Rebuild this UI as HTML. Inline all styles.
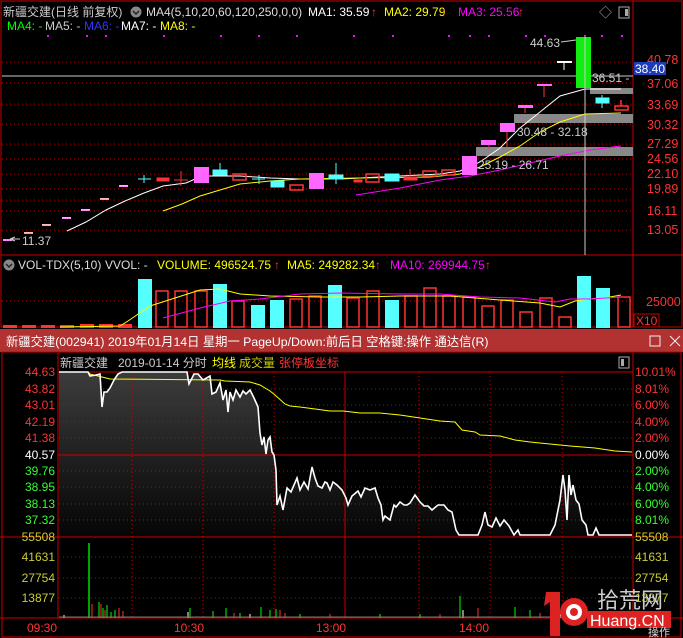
<!DOCTYPE html>
<html><head><meta charset="utf-8"><style>
html,body{margin:0;padding:0;background:#000;width:683px;height:638px;overflow:hidden}
svg{display:block}
text{font-family:"Liberation Sans","Noto Sans CJK SC",sans-serif}
</style></head><body>
<svg width="683" height="638" viewBox="0 0 683 638" xmlns="http://www.w3.org/2000/svg" font-size="12">
<defs>
<linearGradient id="g" x1="0" y1="0" x2="0" y2="1"><stop offset="0" stop-color="#3c3c3c"/><stop offset="1" stop-color="#050505"/></linearGradient>
</defs>
<rect width="683" height="638" fill="#000"/>
<rect x="1" y="1" width="681" height="326" fill="none" stroke="#c00" stroke-width="1"/>
<line x1="633" y1="1" x2="633" y2="327" stroke="#c00"/>
<line x1="1" y1="255" x2="683" y2="255" stroke="#c00"/>
<g stroke="#c00" stroke-dasharray="1,3">
<line x1="2" y1="62" x2="633" y2="62"/><line x1="2" y1="83" x2="633" y2="83"/><line x1="2" y1="104" x2="633" y2="104"/>
<line x1="2" y1="124" x2="633" y2="124"/><line x1="2" y1="144" x2="633" y2="144"/><line x1="2" y1="159" x2="633" y2="159"/>
<line x1="2" y1="174" x2="633" y2="174"/><line x1="2" y1="189" x2="633" y2="189"/><line x1="2" y1="200" x2="633" y2="200"/>
<line x1="2" y1="211" x2="633" y2="211"/><line x1="2" y1="230" x2="633" y2="230"/>
<line x1="2" y1="301" x2="633" y2="301"/>
</g>
<line x1="2" y1="76" x2="633" y2="76" stroke="#ccc"/>
<text x="3" y="16" fill="#ccc">新疆交建(日线 前复权)</text>
<circle cx="136" cy="12" r="5.5" fill="#888"/><path d="M133 11l3 3 3-3" stroke="#222" fill="none" stroke-width="1.5"/>
<text x="146" y="16" fill="#ddd">MA4(5,10,20,60,120,250,0,0)</text>
<text x="308" y="16" fill="#fff">MA1: 35.59</text><text x="371" y="16" fill="#f33">↑</text>
<text x="384" y="16" fill="#ff0">MA2: 29.79</text><text x="441" y="16" fill="#f33">↑</text>
<text x="458" y="16" fill="#f0f">MA3: 25.56</text><text x="518" y="16" fill="#f33">↑</text>
<text x="599" y="17" fill="#aaa" font-size="13">◇</text>
<rect x="619" y="7" width="10" height="11" fill="none" stroke="#aaa"/><rect x="625" y="9" width="3" height="7" fill="#aaa"/>
<text x="7" y="30" fill="#0f0">MA4: -</text><text x="45" y="30" fill="#ccc">MA5: -</text>
<text x="84" y="30" fill="#33f">MA6: -</text><text x="121" y="30" fill="#fff">MA7: -</text><text x="160" y="30" fill="#ff0">MA8: -</text>
<g fill="#f0f">
<rect x="47" y="35" width="2" height="2"/><rect x="86" y="35" width="2" height="2"/><rect x="105" y="35" width="2" height="2"/><rect x="163" y="35" width="2" height="2"/><rect x="220" y="35" width="2" height="2"/><rect x="258" y="35" width="2" height="2"/><rect x="296" y="35" width="2" height="2"/><rect x="353" y="35" width="2" height="2"/><rect x="392" y="35" width="2" height="2"/><rect x="448" y="35" width="2" height="2"/><rect x="469" y="35" width="2" height="2"/><rect x="488" y="35" width="2" height="2"/><rect x="525" y="35" width="2" height="2"/><rect x="544" y="35" width="2" height="2"/><rect x="601" y="35" width="2" height="2"/><rect x="621" y="35" width="2" height="2"/>
</g>
<rect x="590" y="88" width="43" height="6" fill="#888"/>
<rect x="514" y="114" width="119" height="9" fill="#888"/>
<rect x="476" y="147" width="157" height="9" fill="#888"/>
<polyline fill="none" stroke="#fff" points="67,231 86,222 106,210 125,201 144,193 163,186 186,183 202,176 240,176 270,178 300,179 340,179 400,176 440,174 460,171 480,162 500,148 520,128 540,112 560,96 585,89 621,89"/>
<polyline fill="none" stroke="#ff0" points="163,211 182,204 200,196 220,190 240,184 270,181 300,179 360,178 430,177 460,174 480,167 500,157 520,146 540,132 560,122 585,114 621,113"/>
<polyline fill="none" stroke="#f0f" points="356,195 400,188 440,180 470,176 500,170 530,163 560,156 590,150 621,146"/>
<g fill="#fbb" stroke="none">
<rect x="3" y="239" width="9" height="1.5" fill="#f8f"/><rect x="24" y="232" width="9" height="1.5"/><rect x="42" y="224" width="9" height="1.5"/><rect x="62" y="217" width="9" height="1.5"/><rect x="81" y="209" width="9" height="1.5"/><rect x="100" y="198" width="9" height="1.5"/><rect x="119" y="185" width="9" height="1.5"/>
</g>
<g fill="#f8f">
<rect x="3" y="240" width="9" height="1"/><rect x="24" y="233" width="9" height="1"/><rect x="42" y="225" width="9" height="1"/><rect x="62" y="218" width="9" height="1"/><rect x="81" y="210" width="9" height="1"/><rect x="100" y="199" width="9" height="1"/><rect x="119" y="186" width="9" height="1"/>
</g>
<g stroke="#5ff" fill="#5ff">
<line x1="138" y1="179" x2="151" y2="179"/><line x1="144" y1="175" x2="144" y2="183"/>
<line x1="220" y1="163" x2="220" y2="175"/><rect x="213" y="170" width="14" height="5"/>
<line x1="252" y1="179" x2="265" y2="179"/><line x1="259" y1="175" x2="259" y2="184"/>
<rect x="271" y="181" width="13" height="6"/>
<line x1="336" y1="163" x2="336" y2="184"/><rect x="329" y="175" width="14" height="4"/>
<rect x="385" y="174" width="14" height="7"/>
<line x1="602" y1="95" x2="602" y2="108"/><rect x="596" y="98" width="13" height="5"/>
</g>
<g stroke="#f33" fill="#f33">
<rect x="157" y="178" width="12" height="3"/>
<line x1="174" y1="180" x2="188" y2="180"/><line x1="181" y1="171" x2="181" y2="186"/>
<rect x="354" y="180" width="8" height="2"/><line x1="410" y1="169" x2="410" y2="180"/><rect x="404" y="177" width="13" height="3"/>
</g>
<g stroke="#f33" fill="none" stroke-width="1.5">
<rect x="233" y="174" width="13" height="6"/><rect x="290" y="185" width="13" height="5"/><rect x="366" y="174" width="13" height="8"/>
<rect x="423" y="171" width="13" height="5"/><rect x="442" y="170" width="13" height="5"/><rect x="615" y="106" width="13" height="4"/>
<line x1="621" y1="100" x2="621" y2="106"/>
</g>
<g fill="#f6f">
<rect x="194" y="167" width="15" height="16"/><rect x="309" y="173" width="15" height="16"/><rect x="462" y="156" width="15" height="19"/>
<rect x="481" y="140" width="15" height="5"/><rect x="500" y="123" width="15" height="9"/><rect x="518" y="105" width="15" height="3"/><rect x="537" y="84" width="15" height="2"/>
</g>
<g stroke="#f33"><line x1="507" y1="132" x2="507" y2="147"/><line x1="525" y1="108" x2="525" y2="113"/><line x1="544" y1="86" x2="544" y2="97"/><line x1="489" y1="145" x2="489" y2="149"/></g>
<rect x="557" y="61" width="15" height="2" fill="#fff"/><line x1="564" y1="62" x2="564" y2="70" stroke="#fff"/>
<rect x="576" y="37" width="15" height="51" fill="#1e1"/>
<line x1="585" y1="35" x2="585" y2="255" stroke="#ccc"/>
<text x="530" y="47" fill="#ccc">44.63</text><line x1="561" y1="42" x2="576" y2="40" stroke="#ccc"/>
<text x="592" y="82" fill="#ccc">36.51 -</text>
<text x="517" y="136" fill="#ccc">30.48 - 32.18</text>
<text x="478" y="169" fill="#ccc">25.19 - 26.71</text>
<text x="22" y="245" fill="#ccc">11.37</text><path d="M10 239l5 -2 M10 239l5 2 M10 239h10" stroke="#ccc"/>
<g fill="#f33" font-size="12.5">
<text x="647" y="64">40.78</text>
<text x="647" y="88">37.06</text><text x="647" y="109">33.69</text><text x="647" y="129">30.32</text><text x="647" y="148">27.29</text>
<text x="647" y="163">24.56</text><text x="647" y="178">22.10</text><text x="647" y="193">19.89</text><text x="647" y="215">16.11</text><text x="647" y="234">13.05</text>
<text x="646" y="306">25000</text>
</g>
<rect x="634" y="62" width="32" height="13" fill="#1c3cb8"/><text x="635" y="73" fill="#fff">38.40</text>
<circle cx="9" cy="265" r="5.5" fill="#888"/><path d="M6 264l3 3 3-3" stroke="#222" fill="none" stroke-width="1.5"/>
<text x="18" y="269" fill="#ddd">VOL-TDX(5,10)</text><text x="105" y="269" fill="#ddd">VVOL: -</text>
<text x="157" y="269" fill="#ff0">VOLUME: 496524.75</text><text x="274" y="269" fill="#f33">↑</text>
<text x="287" y="269" fill="#ff0">MA5: 249282.34</text><text x="375" y="269" fill="#f33">↑</text>
<text x="390" y="269" fill="#f0f">MA10: 269944.75</text><text x="485" y="269" fill="#f33">↑</text>
<rect x="634" y="314" width="25" height="13" fill="none" stroke="#c00"/><text x="636" y="325" fill="#f33">X10</text>
<g fill="#5ff">
<rect x="138" y="279" width="14" height="49"/><rect x="213" y="284" width="14" height="44"/><rect x="251" y="305" width="14" height="23"/><rect x="270" y="300" width="14" height="28"/>
<rect x="328" y="285" width="14" height="43"/><rect x="385" y="300" width="14" height="28"/><rect x="577" y="276" width="14" height="52"/><rect x="596" y="288" width="14" height="40"/>
</g>
<g fill="none" stroke="#f33" stroke-width="1.5">
<rect x="156" y="291" width="12" height="36"/><rect x="175" y="291" width="12" height="36"/><rect x="195" y="291" width="12" height="36"/><rect x="232" y="301" width="12" height="26"/>
<rect x="290" y="299" width="12" height="28"/><rect x="309" y="296" width="12" height="31"/><rect x="347" y="298" width="12" height="29"/><rect x="367" y="291" width="12" height="36"/>
<rect x="405" y="296" width="12" height="31"/><rect x="424" y="288" width="12" height="39"/><rect x="443" y="296" width="12" height="31"/><rect x="463" y="297" width="12" height="30"/>
<rect x="482" y="306" width="12" height="21"/><rect x="501" y="300" width="12" height="27"/><rect x="520" y="312" width="12" height="15"/><rect x="540" y="298" width="12" height="29"/>
<rect x="559" y="317" width="12" height="10"/><rect x="618" y="297" width="12" height="30"/>
</g>
<g fill="#f33"><rect x="3" y="325" width="14" height="3"/><rect x="22" y="325" width="14" height="3"/><rect x="41" y="325" width="14" height="3"/><rect x="60" y="325" width="14" height="3"/><rect x="80" y="324" width="14" height="4"/><rect x="99" y="324" width="14" height="4"/><rect x="118" y="324" width="14" height="4"/></g>
<polyline fill="none" stroke="#ff0" points="60,327 120,326 128,321 150,306 200,290 220,289 240,294 270,296 320,297 360,297 400,296 450,296 500,300 540,303 560,307 575,301 590,299 610,297 621,295"/>
<polyline fill="none" stroke="#f0f" points="163,318 200,308 230,301 260,299 300,294 340,293 400,294 440,294 480,297 520,298 555,302 570,299 590,299 621,297"/>
<rect x="0" y="329" width="683" height="23" fill="#b23232"/>
<text x="6" y="346" fill="#fff" font-size="12.3">新疆交建(002941) 2019年01月14日 星期一 PageUp/Down:前后日 空格键:操作 通达信(R)</text>
<rect x="650" y="336" width="10" height="10" fill="none" stroke="#eee"/>
<path d="M670 336l10 10M680 336l-10 10" stroke="#eee"/>
<rect x="0" y="352" width="683" height="286" fill="#000"/>
<rect x="2" y="352" width="679" height="285" fill="none" stroke="#c00"/>
<text x="60" y="367" fill="#ccc">新疆交建</text><text x="118" y="367" fill="#ccc">2019-01-14 分时</text>
<text x="212" y="367" fill="#ff0">均线</text><text x="239" y="367" fill="#cc0">成交量</text><text x="279" y="367" fill="#f33">张停板坐标</text>
<rect x="619" y="357" width="10" height="11" fill="none" stroke="#aaa"/><rect x="621" y="359" width="3" height="7" fill="#aaa"/>
<path fill="url(#g)" d="M59,372 88,372 90,376 96,375 100,374 102,407 104,392 107,392 110,388 114,380 118,374 122,372 187,372 189,384 194,374 198,374 203,380 210,376 212,394 216,392 220,383 223,400 226,390 228,412 230,392 233,400 236,390 240,397 243,391 246,394 250,390 254,398 258,407 260,433 262,445 264,437 266,454 268,440 270,437 272,452 274,455 276,470 277,505 280,496 283,510 287,488 291,492 297,478 300,490 304,482 308,489 312,467 315,478 318,486 322,488 325,482 327,483 330,490 333,482 337,485 342,490 346,498 348,505 352,496 358,491 361,497 365,488 370,490 375,488 378,498 381,505 383,520 385,516 390,520 394,505 396,507 400,502 404,505 407,505 410,503 415,495 420,502 424,506 428,506 432,510 438,505 444,505 448,510 452,512 456,530 459,535 478,535 482,525 485,512 488,525 492,527 496,518 500,526 504,520 509,526 514,535 518,530 520,535 550,535 555,525 560,500 563,475 565,490 567,520 569,475 571,495 573,485 576,500 579,504 582,520 586,525 588,535 593,535 596,528 599,535 632,535 632,537 59,537Z"/>
<g stroke="#c00">
<line x1="58" y1="372" x2="633" y2="372"/><line x1="58" y1="455" x2="633" y2="455"/><line x1="0" y1="537" x2="683" y2="537"/><line x1="0" y1="618" x2="683" y2="618"/>
<line x1="58" y1="353" x2="58" y2="618"/><line x1="633" y1="353" x2="633" y2="618"/><line x1="345" y1="372" x2="345" y2="618"/>
</g>
<g stroke="#c00" stroke-dasharray="1,3">
<line x1="59" y1="389" x2="632" y2="389"/><line x1="59" y1="405" x2="632" y2="405"/><line x1="59" y1="422" x2="632" y2="422"/><line x1="59" y1="438" x2="632" y2="438"/>
<line x1="59" y1="471" x2="632" y2="471"/><line x1="59" y1="487" x2="632" y2="487"/><line x1="59" y1="504" x2="632" y2="504"/><line x1="59" y1="520" x2="632" y2="520"/>
<line x1="59" y1="557" x2="632" y2="557"/><line x1="59" y1="578" x2="632" y2="578"/><line x1="59" y1="598" x2="632" y2="598"/>
<line x1="132" y1="372" x2="132" y2="618"/><line x1="203" y1="372" x2="203" y2="618"/><line x1="274" y1="372" x2="274" y2="618"/><line x1="419" y1="372" x2="419" y2="618"/><line x1="490" y1="372" x2="490" y2="618"/><line x1="562" y1="372" x2="562" y2="618"/>
</g>
<polyline fill="none" stroke="#ff0" points="59,372 88,372 90,374 110,379 220,380 225,381 250,382 260,385 270,391 275,395 285,404 290,406 300,407 330,411 343,411 360,413 380,413 400,415 420,418 440,421 455,422 462,430 475,432 480,435 500,436 515,440 530,442 550,444 570,446 595,448 615,451 632,452"/>
<polyline fill="none" stroke="#fff" stroke-width="1.6" points="59,372 88,372 90,376 96,375 100,374 102,407 104,392 107,392 110,388 114,380 118,374 122,372 187,372 189,384 194,374 198,374 203,380 210,376 212,394 216,392 220,383 223,400 226,390 228,412 230,392 233,400 236,390 240,397 243,391 246,394 250,390 254,398 258,407 260,433 262,445 264,437 266,454 268,440 270,437 272,452 274,455 276,470 277,505 280,496 283,510 287,488 291,492 297,478 300,490 304,482 308,489 312,467 315,478 318,486 322,488 325,482 327,483 330,490 333,482 337,485 342,490 346,498 348,505 352,496 358,491 361,497 365,488 370,490 375,488 378,498 381,505 383,520 385,516 390,520 394,505 396,507 400,502 404,505 407,505 410,503 415,495 420,502 424,506 428,506 432,510 438,505 444,505 448,510 452,512 456,530 459,535 478,535 482,525 485,512 488,525 492,527 496,518 500,526 504,520 509,526 514,535 518,530 520,535 550,535 555,525 560,500 563,475 565,490 567,520 569,475 571,495 573,485 576,500 579,504 582,520 586,525 588,535 593,535 596,528 599,535 632,535"/>
<line x1="89" y1="543" x2="89" y2="618" stroke="#0f0" stroke-width="1.3"/>
<g stroke="#0f0">
<line x1="99" y1="602" x2="99" y2="618"/><line x1="103" y1="608" x2="103" y2="618"/><line x1="107" y1="605" x2="107" y2="618"/><line x1="111" y1="612" x2="111" y2="618"/><line x1="115" y1="610" x2="115" y2="618"/><line x1="190" y1="608" x2="190" y2="618"/><line x1="213" y1="611" x2="213" y2="618"/><line x1="226" y1="608" x2="226" y2="618"/><line x1="261" y1="607" x2="261" y2="618"/><line x1="270" y1="610" x2="270" y2="618"/><line x1="276" y1="609" x2="276" y2="618"/><line x1="460" y1="596" x2="460" y2="618"/><line x1="515" y1="607" x2="515" y2="618"/><line x1="530" y1="610" x2="530" y2="618"/><line x1="600" y1="611" x2="600" y2="618"/><line x1="240" y1="613" x2="240" y2="618"/><line x1="300" y1="614" x2="300" y2="618"/><line x1="380" y1="614" x2="380" y2="618"/><line x1="420" y1="614" x2="420" y2="618"/>
</g>
<g stroke="#f33">
<line x1="92" y1="604" x2="92" y2="618"/><line x1="101" y1="604" x2="101" y2="618"/><line x1="105" y1="610" x2="105" y2="618"/><line x1="119" y1="608" x2="119" y2="618"/><line x1="123" y1="611" x2="123" y2="618"/><line x1="234" y1="613" x2="234" y2="618"/><line x1="280" y1="610" x2="280" y2="618"/><line x1="285" y1="613" x2="285" y2="618"/><line x1="478" y1="608" x2="478" y2="618"/><line x1="540" y1="613" x2="540" y2="618"/><line x1="610" y1="614" x2="610" y2="618"/><line x1="330" y1="614" x2="330" y2="618"/><line x1="440" y1="614" x2="440" y2="618"/>
</g>
<g stroke="#fff"><line x1="188" y1="612" x2="188" y2="618"/><line x1="463" y1="610" x2="463" y2="618"/><line x1="64" y1="615" x2="64" y2="618"/><line x1="250" y1="614" x2="250" y2="618"/><line x1="560" y1="614" x2="560" y2="618"/></g>
<line x1="59" y1="617" x2="632" y2="617" stroke="#777"/>
<g fill="#f33" text-anchor="end">
<text x="55" y="376">44.63</text><text x="55" y="393">43.82</text><text x="55" y="409">43.01</text><text x="55" y="426">42.19</text><text x="55" y="442">41.38</text>
</g>
<text x="55" y="459" fill="#fff" text-anchor="end">40.57</text>
<g fill="#3f3" text-anchor="end"><text x="55" y="475">39.76</text><text x="55" y="491">38.95</text><text x="55" y="508">38.13</text><text x="55" y="524">37.32</text></g>
<g fill="#cc3" text-anchor="end"><text x="55" y="541">55508</text><text x="55" y="561">41631</text><text x="55" y="582">27754</text><text x="55" y="602">13877</text></g>
<g fill="#f33"><text x="635" y="376">10.01%</text><text x="635" y="393">8.01%</text><text x="635" y="409">6.00%</text><text x="635" y="426">4.00%</text><text x="635" y="442">2.00%</text></g>
<text x="635" y="459" fill="#fff">0.00%</text>
<g fill="#3f3"><text x="635" y="475">2.00%</text><text x="635" y="491">4.00%</text><text x="635" y="508">6.00%</text><text x="635" y="524">8.01%</text></g>
<g fill="#cc3"><text x="635" y="541">55508</text><text x="635" y="561">41631</text><text x="635" y="582">27754</text><text x="635" y="602">13877</text></g>
<g fill="#f33"><text x="27" y="632">09:30</text><text x="174" y="632">10:30</text><text x="316" y="632">13:00</text><text x="459" y="632">14:00</text></g>
<path d="M546 592h14v44h-10v-34l-6 4z" fill="#d22"/>
<circle cx="574" cy="612" r="14" fill="#d22"/><circle cx="574" cy="612" r="8" fill="#fff"/><circle cx="574" cy="612" r="4" fill="#d22"/>
<text x="597" y="608" fill="#ccc" font-size="22">拾荒网</text>
<rect x="587" y="611" width="84" height="17" fill="#d22"/><text x="590" y="626" fill="#fff" font-size="16">Huang.CN</text>
<text x="648" y="636" fill="#ddd" font-size="11">操作</text>
</svg>
</body></html>
